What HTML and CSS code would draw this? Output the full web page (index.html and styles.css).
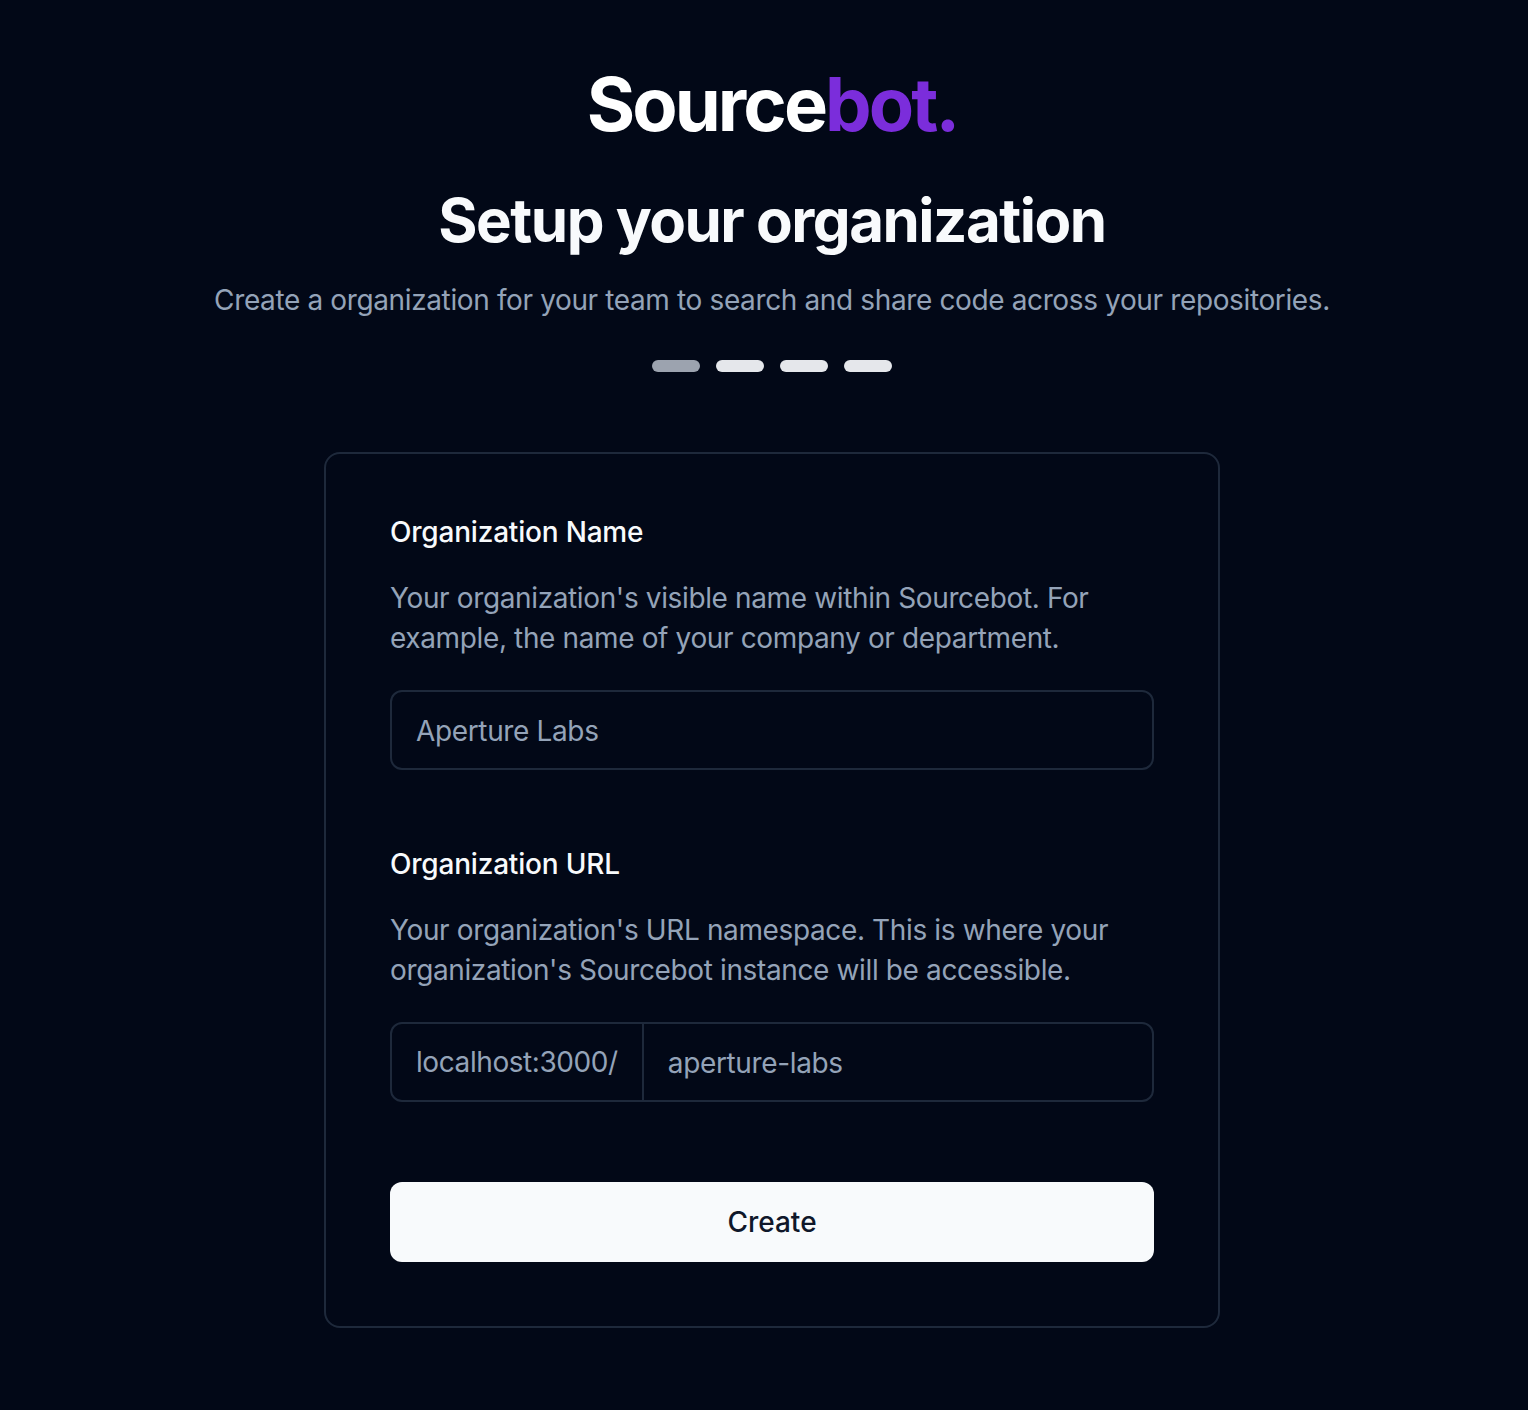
FILE: index.html
```html
<!DOCTYPE html>
<html lang="en">
<head>
    <meta charset="UTF-8">
    <meta name="viewport" content="width=device-width, initial-scale=1.0">
    <title>Setup your organization</title>
    <link rel="stylesheet" href="styles.css">
</head>
<body>
    <main class="page">
        <div class="logo">Source<span class="logo-accent">bot.</span></div>
        <h1 class="title">Setup your organization</h1>
        <p class="subtitle">Create a organization for your team to search and share code across your repositories.</p>
        <div class="steps">
            <span class="step step-active"></span>
            <span class="step"></span>
            <span class="step"></span>
            <span class="step"></span>
        </div>
        <section class="card">
            <form class="form">
                <div class="form-group">
                    <label class="label" for="orgName">Organization Name</label>
                    <p class="hint">Your organization's visible name within Sourcebot. For example, the name of your company or department.</p>
                    <input class="input" type="text" id="orgName" placeholder="Aperture Labs">
                </div>
                <div class="form-group">
                    <label class="label" for="orgUrl">Organization URL</label>
                    <p class="hint">Your organization's URL namespace. This is where your organization's Sourcebot instance will be accessible.</p>
                    <div class="url-field">
                        <span class="url-prefix">localhost:3000/</span>
                        <input class="url-input" type="text" id="orgUrl" placeholder="aperture-labs">
                    </div>
                </div>
                <button class="submit" type="submit">Create</button>
            </form>
        </section>
    </main>
</body>
</html>
```

FILE: styles.css
```css
* {
    box-sizing: border-box;
}
body {
    font-family: Inter, "Liberation Sans", sans-serif;
    margin: 0;
    background-color: #020817;
    color: #f8fafc;
}
.page {
    display: flex;
    flex-direction: column;
    align-items: center;
    min-height: 1410px;
    padding: 60px 0 0 16px;
}
.logo {
    font-size: 74px;
    line-height: 88px;
    font-weight: 700;
    letter-spacing: -2.9px;
    color: #ffffff;
}
.logo-accent {
    color: #7b2ddb;
}
.title {
    margin: 36px 0 0;
    font-size: 60px;
    line-height: 72px;
    font-weight: 700;
    letter-spacing: -1.5px;
}
.subtitle {
    margin: 24px 0 0;
    font-size: 28px;
    line-height: 40px;
    letter-spacing: -0.37px;
    color: #94a3b8;
}
.steps {
    display: flex;
    gap: 16px;
    margin-top: 40px;
}
.step {
    width: 48px;
    height: 12px;
    border-radius: 6px;
    background-color: #e5e7eb;
}
.step-active {
    background-color: #9ca3af;
}
.card {
    width: 896px;
    margin-top: 80px;
    padding: 64px;
    border: 2px solid #1e293b;
    border-radius: 16px;
}
.form {
    display: flex;
    flex-direction: column;
}
.form-group {
    margin-bottom: 80px;
}
.label {
    display: block;
    font-size: 28px;
    line-height: 28px;
    font-weight: 500;
    letter-spacing: -0.2px;
}
.hint {
    margin: 32px 0 32px;
    font-size: 28px;
    line-height: 40px;
    letter-spacing: -0.37px;
    color: #94a3b8;
}
.input,
.url-field {
    display: flex;
    width: 100%;
    height: 80px;
    border: 2px solid #1e293b;
    border-radius: 12px;
    background: transparent;
}
.input,
.url-input {
    font-family: inherit;
    font-size: 28px;
    letter-spacing: -0.36px;
    color: #f8fafc;
    padding: 2px 24px 0;
    outline: none;
}
.input::placeholder,
.url-input::placeholder {
    color: #94a3b8;
    opacity: 1;
}
.url-prefix {
    display: flex;
    align-items: center;
    padding: 0 24px;
    font-size: 28px;
    letter-spacing: -0.42px;
    color: #94a3b8;
    border-right: 2px solid #1e293b;
}
.url-input {
    flex: 1;
    min-width: 0;
    border: none;
    background: transparent;
}
.submit {
    height: 80px;
    border: none;
    border-radius: 12px;
    background-color: #f8fafc;
    color: #0f172a;
    font-family: inherit;
    font-size: 28px;
    font-weight: 500;
    cursor: pointer;
}
```
